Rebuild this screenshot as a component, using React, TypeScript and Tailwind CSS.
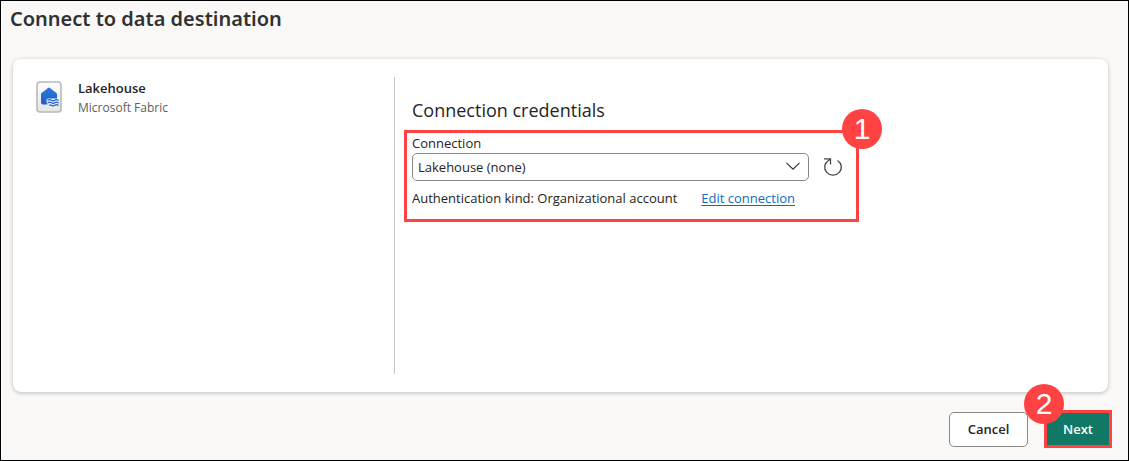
import type { ReactNode } from "react";

function LakehouseIcon() {
  return (
    <svg width="26" height="32" viewBox="0 0 26 32" className="shrink-0" aria-hidden="true">
      <defs>
        <linearGradient id="tile" x1="0" y1="0" x2="0" y2="1">
          <stop offset="0" stopColor="#fdfdfd" />
          <stop offset="1" stopColor="#e4e4e4" />
        </linearGradient>
        <linearGradient id="house" x1="0" y1="0" x2="0" y2="1">
          <stop offset="0" stopColor="#2f78dc" />
          <stop offset="1" stopColor="#1f5cc6" />
        </linearGradient>
      </defs>
      <rect x="1" y="1" width="24" height="30" rx="3" fill="url(#tile)" stroke="#b8b8b8" strokeWidth="1.6" />
      <path
        d="M12 6.900a1.600 1.600 0 0 1 1.900 0l6.500 5.200c.4.3.6.8.6 1.300v4h-8.500c-1.300 0-2 1-2 2.200 0 1.800.3 3 1 4H7c-1.200 0-2-.8-2-2v-8.200c0-.5.2-1 .6-1.300z"
        fill="url(#house)"
      />
      <g fill="none" stroke="#2565cc" strokeWidth="1.200" strokeLinecap="round">
        <path d="M12 19.300c1.200-.8 2.200-.8 3.400 0s2.200.8 3.400 0 2.200-.8 3.400 0" />
        <path d="M12 21.800c1.200-.8 2.200-.8 3.400 0s2.200.8 3.400 0 2.200-.8 3.400 0" />
        <path d="M13.500 24.300c.8-.5 1.300-.5 1.900 0 1.200.8 2.200.8 3.400 0s2.200-.8 3.400 0" />
      </g>
    </svg>
  );
}

function RefreshIcon() {
  return (
    <svg width="20" height="20" viewBox="0 0 20 20" fill="none" stroke="#484644" strokeWidth="1.3" aria-hidden="true">
      <path d="M14.500 3.500A8.300 7.900 0 1 1 5.500 3.500L7.300 2.200" />
      <path d="M1 1.900h6.500v5.600" />
    </svg>
  );
}

function StepBadge({ children, className }: { children: ReactNode; className: string }) {
  return (
    <span
      className={`absolute flex size-10 items-center justify-center rounded-full bg-[#ff4343] font-['Liberation_Sans',sans-serif] text-[30px] leading-none text-white ${className}`}
    >
      {children}
    </span>
  );
}

export default function App() {
  return (
    <div className="flex min-h-screen flex-col border border-black bg-[#faf9f8] font-['Open_Sans',sans-serif] text-[13px] leading-5 text-[#252423]">
      <header className="px-[9px] pt-1">
        <h1 className="font-['Noto_Sans',sans-serif] text-xl leading-7 font-semibold text-[#323130]">
          Connect to data destination
        </h1>
      </header>

      <main className="mx-3 mt-[26px] mr-5 flex flex-1 rounded-lg bg-white py-[18px] shadow-[0_1px_4px_rgba(0,0,0,0.25)]">
        <section className="flex w-[382px] shrink-0 gap-4 border-r border-[#c8c6c4] pl-[23px]">
          <div className="pt-1">
            <LakehouseIcon />
          </div>
          <div className="pt-px">
            <h2 className="font-semibold">Lakehouse</h2>
            <p className="text-xs leading-5 text-[#605e5c]">Microsoft Fabric</p>
          </div>
        </section>

        <section className="flex-1 pt-[19px] pl-[9px]">
          <h2 className="pl-2 text-lg leading-7 font-medium">Connection credentials</h2>
          <div className="relative mt-[6px] w-[455px] max-w-full border-3 border-[#ff4343] px-[5px] pb-[11px]">
            <label htmlFor="connection" className="block">
              Connection
            </label>
            <div className="flex items-center gap-[14px]">
              <div className="relative flex-1">
                <select
                  id="connection"
                  defaultValue="none"
                  className="block h-7 w-full appearance-none rounded-[5px] border border-[#8a8886] bg-white pl-[5px] text-[13px]"
                >
                  <option value="none">Lakehouse (none)</option>
                </select>
                <svg
                  width="16"
                  height="10"
                  viewBox="0 0 16 10"
                  fill="none"
                  stroke="#323130"
                  strokeWidth="1.1"
                  className="pointer-events-none absolute top-2 right-2"
                  aria-hidden="true"
                >
                  <path d="M1.500 1.800 8 8.200l6.500-6.400" />
                </svg>
              </div>
              <button type="button" aria-label="Refresh connections" className="mr-2">
                <RefreshIcon />
              </button>
            </div>
            <div className="mt-[7px] flex gap-6">
              <p>Authentication kind: Organizational account</p>
              <a href="#edit" className="text-[#0f6cbd] underline underline-offset-2">
                Edit connection
              </a>
            </div>
            <StepBadge className="-top-6 -right-[26px]">1</StepBadge>
          </div>
        </section>
      </main>

      <footer className="flex items-center justify-end gap-4 pt-[18px] pr-4 pb-3">
        <button type="button" className="h-[35px] w-[79px] rounded-[5px] border border-[#8a8886] bg-white font-semibold">
          Cancel
        </button>
        <div className="relative border-3 border-[#ff4343]">
          <button type="button" className="block h-8 w-[62px] bg-[#117865] font-semibold text-white">
            Next
          </button>
          <StepBadge className="-top-[29px] -left-[23px]">2</StepBadge>
        </div>
      </footer>
    </div>
  );
}
